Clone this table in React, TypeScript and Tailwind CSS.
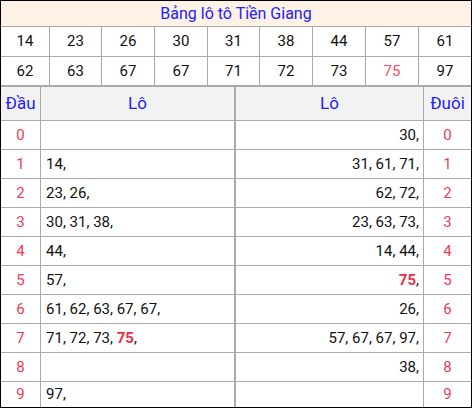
import React from 'react';

const topRows: string[][] = [
  ['14', '23', '26', '30', '31', '38', '44', '57', '61'],
  ['62', '63', '67', '67', '71', '72', '73', '75', '97'],
];
const topWidths = ['w-[48px]', 'w-[52px]', 'w-[53px]', 'w-[53px]', 'w-[52px]', 'w-[53px]', 'w-[53px]', 'w-[53px]', 'w-[53px]'];

const dau: string[][] = [
  [], ['14'], ['23', '26'], ['30', '31', '38'], ['44'], ['57'],
  ['61', '62', '63', '67', '67'], ['71', '72', '73', '75'], [], ['97'],
];
const duoi: string[][] = [
  ['30'], ['31', '61', '71'], ['62', '72'], ['23', '63', '73'], ['14', '44'], ['75'],
  ['26'], ['57', '67', '67', '97'], ['38'], [],
];

function NumList({ items }: { items: string[] }) {
  return (
    <span>
      {items.map((n, i) => (
        <React.Fragment key={i}>
          {n === '75' ? <span className="font-bold text-[#ec2f45]">75</span> : n}
          {','}
          {i < items.length - 1 ? ' ' : ''}
        </React.Fragment>
      ))}
    </span>
  );
}

export default function App() {
  return (
    <div className="w-[472px] h-[408px] overflow-hidden bg-white" style={{ fontFamily: 'Roboto, "Liberation Sans", sans-serif' }}>
      <div className="border border-black h-[408px] flex flex-col">
        <div className="h-[26px] bg-[#fef1e6] border-b border-[#aaaaaa] flex items-center justify-center text-[16px] text-[#2121ff]">
          Bảng lô tô Tiền Giang
        </div>
        {topRows.map((row, r) => (
          <div key={r} className={`flex h-[30px] border-b border-[#aaaaaa] ${r === 1 ? 'border-b-2' : ''}`}>
            {row.map((n, i) => (
              <div
                key={i}
                className={`${topWidths[i]} ${i > 0 ? 'border-l border-[#aaaaaa]' : ''} flex items-center justify-center text-[15px] ${r === 1 && i === 7 ? 'text-[#f2506a]' : 'text-[#111]'}`}
              >
                {n}
              </div>
            ))}
          </div>
        ))}
        <div className="flex h-[34px] bg-[#f2f2f2] border-b border-[#aaaaaa] text-[17px] text-[#2121ff]">
          <div className="w-[39px] flex items-center justify-center">Đầu</div>
          <div className="w-[194px] border-l border-[#aaaaaa] flex items-center justify-center">Lô</div>
          <div className="w-[189px] border-l-2 border-[#aaaaaa] flex items-center justify-center">Lô</div>
          <div className="w-[48px] border-l border-[#aaaaaa] flex items-center justify-center">Đuôi</div>
        </div>
        {dau.map((items, i) => (
          <div key={i} className={`flex ${i === 9 ? 'flex-1' : 'h-[29px] border-b border-[#aaaaaa]'} text-[15px] text-[#111]`}>
            <div className="w-[39px] flex items-center justify-center text-[#ef3b57]">{i}</div>
            <div className="w-[194px] border-l border-[#aaaaaa] flex items-center pl-[5px] whitespace-nowrap">
              <NumList items={items} />
            </div>
            <div className="w-[189px] border-l-2 border-[#aaaaaa] flex items-center justify-end pr-[4px] whitespace-nowrap">
              <NumList items={duoi[i]} />
            </div>
            <div className="w-[48px] border-l border-[#aaaaaa] flex items-center justify-center text-[#ef3b57]">{i}</div>
          </div>
        ))}
      </div>
    </div>
  );
}
